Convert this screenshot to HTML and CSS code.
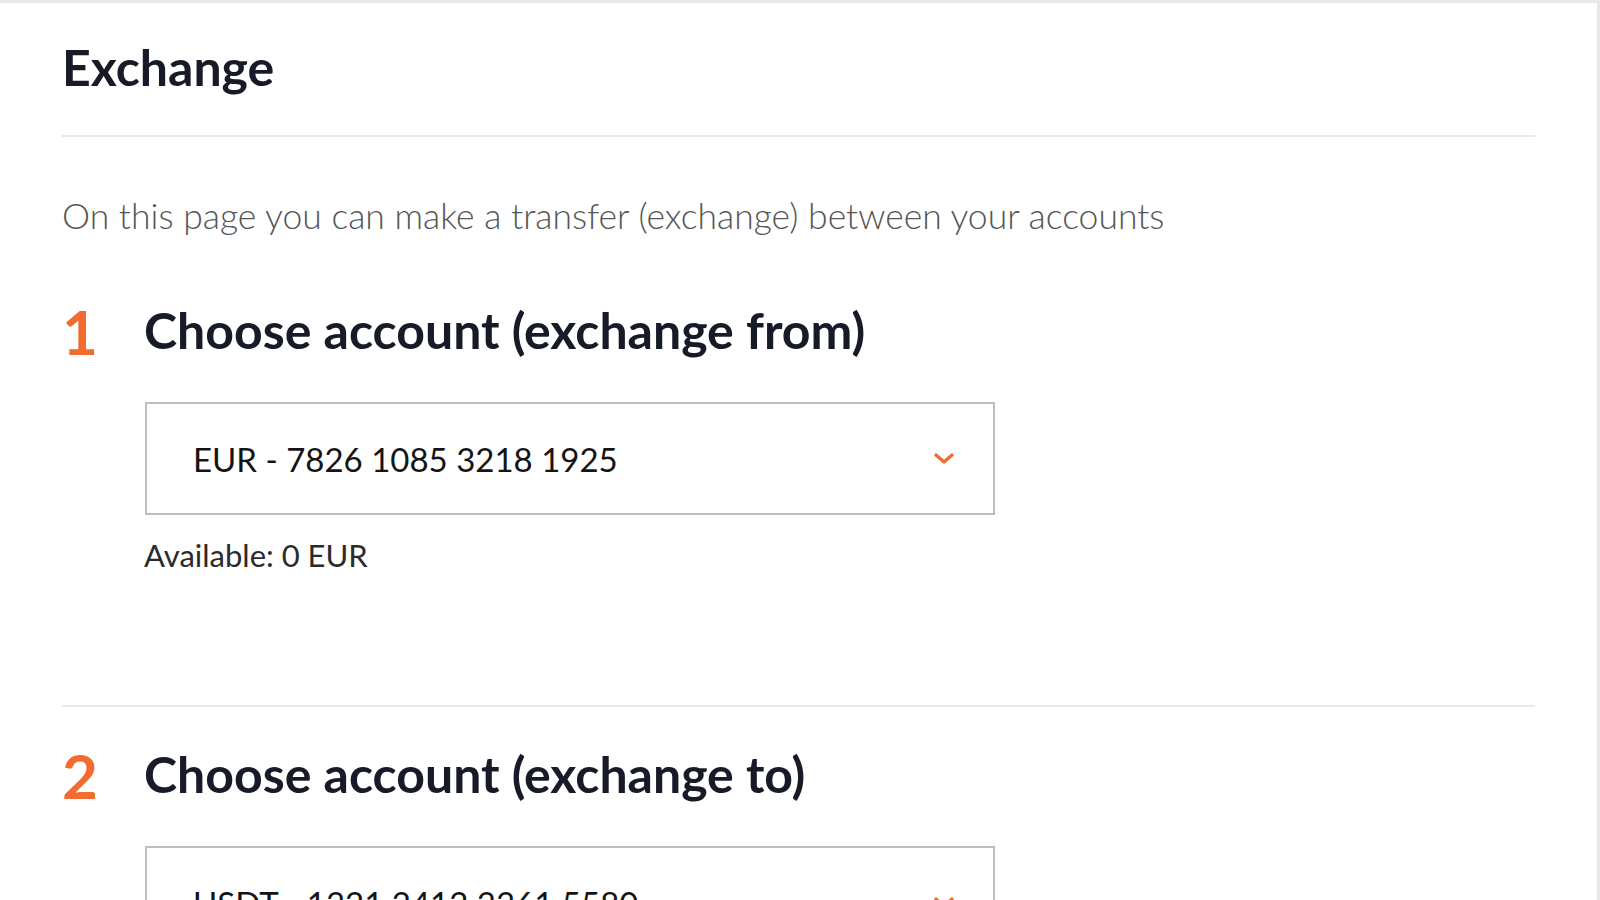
FILE: index.html
```
<!DOCTYPE html>
<html lang="en">
<head>
<meta charset="utf-8">
<title>Exchange</title>
<link rel="stylesheet" href="styles.css">
</head>
<body>
<main class="card">
  <h1 class="page-title">Exchange</h1>
  <p class="intro">On this page you can make a transfer (exchange) between your accounts</p>

  <section class="step step-first">
    <div class="step-num">1</div>
    <div class="step-body">
      <h2 class="step-title">Choose account (exchange from)</h2>
      <div class="select">
        <span class="select-value">EUR - 7826 1085 3218 1925</span>
        <svg class="chevron" width="22" height="13" viewBox="0 0 22 13"><path d="M3 3 L11 10 L19 3" fill="none" stroke="#f26b2f" stroke-width="3.4" stroke-linecap="round" stroke-linejoin="round"/></svg>
      </div>
      <div class="available">Available: 0 EUR</div>
    </div>
  </section>

  <section class="step step-second">
    <div class="step-num">2</div>
    <div class="step-body">
      <h2 class="step-title">Choose account (exchange to)</h2>
      <div class="select">
        <span class="select-value">USDT - 1321 2412 3361 5580</span>
        <svg class="chevron" width="22" height="13" viewBox="0 0 22 13"><path d="M3 3 L11 10 L19 3" fill="none" stroke="#f26b2f" stroke-width="3.4" stroke-linecap="round" stroke-linejoin="round"/></svg>
      </div>
      <div class="available">Available: 0 USDT</div>
    </div>
  </section>
</main>
</body>
</html>
```
FILE: styles.css
```
html, body {
  margin: 0;
  padding: 0;
}
body {
  background: #ebe7e5;
  font-family: Lato, "Liberation Sans", sans-serif;
  overflow: hidden;
  height: 900px;
}
.card {
  background: #ffffff;
  margin: 3px 3px 0 0;
  min-height: 897px;
  padding: 34px 62px 0 62px;
  box-sizing: border-box;
}
.page-title {
  margin: 0;
  font-size: 50px;
  line-height: 60px;
  font-weight: 700;
  color: #171b27;
  padding-bottom: 38px;
  border-bottom: 2px solid #ebe8e7;
}
.intro {
  margin: 57px 0 63px 0;
  font-size: 35.5px;
  line-height: 43px;
  font-weight: 300;
  color: #555555;
}
.step {
  display: flex;
  align-items: flex-start;
}
.step-first {
  padding-bottom: 131px;
}
.step-second {
  border-top: 2px solid #ebe8e7;
  padding-top: 37px;
}
.step-num {
  width: 82px;
  flex: none;
  font-size: 62px;
  line-height: 60px;
  font-weight: 700;
  color: #f26b2f;
  margin-top: 1px;
}
.step-body {
  flex: 1;
}
.step-title {
  margin: 0;
  font-size: 50px;
  line-height: 60px;
  font-weight: 700;
  color: #171b27;
}
.select {
  margin-top: 42px;
  margin-left: 1px;
  width: 850px;
  height: 113px;
  box-sizing: border-box;
  border: 2px solid #c3bbb7;
  display: flex;
  align-items: center;
  justify-content: space-between;
  padding: 0 38px 0 46px;
}
.select-value {
  font-size: 33px;
  line-height: 40px;
  font-weight: 400;
  color: #141414;
}
.chevron {
  display: block;
  flex: none;
}
.available {
  margin-top: 22px;
  font-size: 31px;
  line-height: 37px;
  font-weight: 400;
  color: #2b2b2b;
}
```
